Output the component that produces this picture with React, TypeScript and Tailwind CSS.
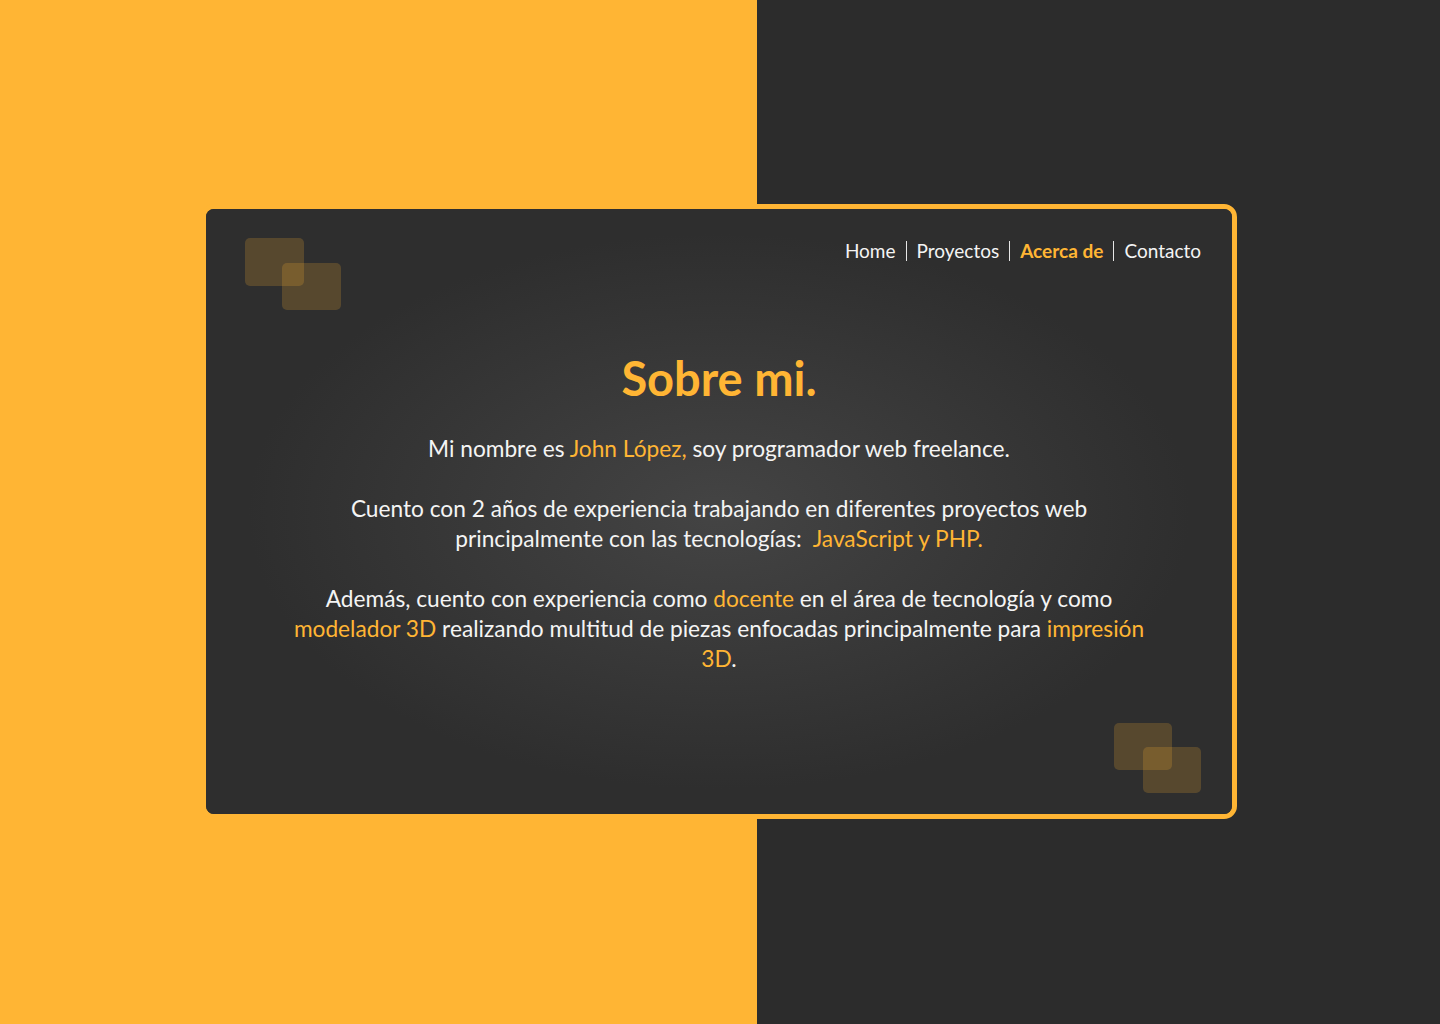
import React from 'react';

const links = ['Home', 'Proyectos', 'Acerca de', 'Contacto'];

export default function App() {
  return (
    <div
      className="w-full h-[1024px] flex items-center justify-center bg-[linear-gradient(to_right,#FFB534_757px,#2c2c2c_757px)]"
      style={{ fontFamily: 'Lato, "Open Sans", sans-serif' }}
    >
      <div className="w-[1036px] h-[615px] mb-[2px] mr-[2px] border-[5px] border-[#FFB534] rounded-[13px] bg-[#2c2c2c]">
        <div className="w-full h-full rounded-[8px] bg-[radial-gradient(ellipse_at_center,#444444_0%,#2e2e2e_65%)] flex flex-col pt-[29px] pl-[39px] pr-[31px] pb-[21px]">
          <div className="flex justify-between items-start">
            {/* top-left decoration */}
            <div className="relative w-[96px] h-[72px] shrink-0">
              <div className="absolute left-0 top-0 w-[59px] h-[48px] rounded-[5px] bg-[#FFB534]/20" />
              <div className="absolute left-[37px] top-[25px] w-[59px] h-[47px] rounded-[5px] bg-[#FFB534]/20" />
            </div>
            <nav className="flex items-center text-[19px] text-[#f4f4f4] -mt-[1px]">
              {links.map((l, i) => (
                <React.Fragment key={l}>
                  {i > 0 && <span className="mx-[10px] w-px h-[20px] bg-[#e6e6e6]" />}
                  <a className={l === 'Acerca de' ? 'font-bold text-[#FFB534]' : ''}>{l}</a>
                </React.Fragment>
              ))}
            </nav>
          </div>

          <div className="flex-1 flex flex-col items-center text-center pr-[8px] mt-[41px]">
            <h1 className="text-[47px] font-bold text-[#FFB534] leading-[54px]">Sobre mi.</h1>
            <div className="mt-[29px] text-[22.7px] leading-[30px] text-[#f4f4f4] max-w-[900px]">
              <p>
                Mi nombre es <span className="text-[#FFB534]">John López,</span> soy programador web freelance.
              </p>
              <p className="mt-[30px]">
                Cuento con 2 años de experiencia trabajando en diferentes proyectos web
                <br />
                principalmente con las tecnologías:&nbsp; <span className="text-[#FFB534]">JavaScript y PHP.</span>
              </p>
              <p className="mt-[30px]">
                Además, cuento con experiencia como <span className="text-[#FFB534]">docente</span> en el área de tecnología y como
                <br />
                <span className="text-[#FFB534]">modelador 3D</span> realizando multitud de piezas enfocadas principalmente para{' '}
                <span className="text-[#FFB534]">impresión</span>
                <br />
                <span className="text-[#FFB534]">3D</span>.
              </p>
            </div>
          </div>

          <div className="flex justify-end">
            {/* bottom-right decoration */}
            <div className="relative w-[87px] h-[70px] shrink-0">
              <div className="absolute left-0 top-0 w-[58px] h-[47px] rounded-[5px] bg-[#FFB534]/20" />
              <div className="absolute left-[29px] top-[24px] w-[58px] h-[46px] rounded-[5px] bg-[#FFB534]/20" />
            </div>
          </div>
        </div>
      </div>
    </div>
  );
}
